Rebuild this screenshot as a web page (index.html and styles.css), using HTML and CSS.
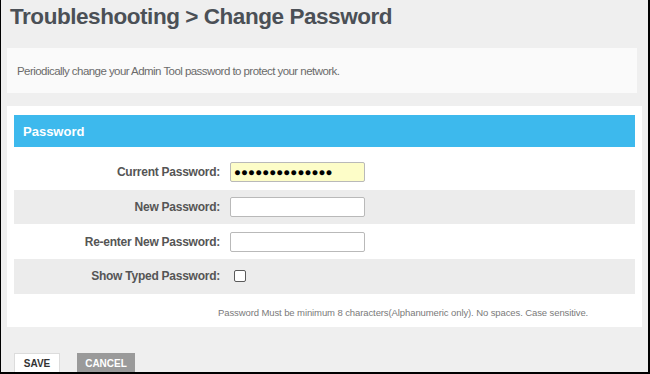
FILE: index.html
```html
<!DOCTYPE html>
<html>
<head>
<meta charset="utf-8">
<link rel="stylesheet" href="styles.css">
</head>
<body>
<div class="frame">
  <h1 class="title">Troubleshooting &gt; Change Password</h1>
  <div class="intro">Periodically change your Admin Tool password to protect your network.</div>
  <div class="panel">
    <div class="panel-head">Password</div>
    <div class="rows">
      <div class="row">
        <label class="lbl">Current Password:</label>
        <div class="field filled">&#9679;&#9679;&#9679;&#9679;&#9679;&#9679;&#9679;&#9679;&#9679;&#9679;&#9679;&#9679;&#9679;&#9679;</div>
      </div>
      <div class="row alt">
        <label class="lbl">New Password:</label>
        <div class="field"></div>
      </div>
      <div class="row">
        <label class="lbl">Re-enter New Password:</label>
        <div class="field"></div>
      </div>
      <div class="row alt">
        <label class="lbl">Show Typed Password:</label>
        <div class="check"></div>
      </div>
    </div>
    <p class="note">Password Must be minimum 8 characters(Alphanumeric only). No spaces. Case sensitive.</p>
  </div>
  <div class="actions">
    <button class="btn save">SAVE</button>
    <button class="btn cancel">CANCEL</button>
  </div>
</div>
</body>
</html>
```
FILE: styles.css
```css
html, body { margin: 0; padding: 0; }
body {
  width: 650px;
  height: 374px;
  overflow: hidden;
  background: #000;
  font-family: "Liberation Sans", Arial, sans-serif;
}
.frame {
  box-sizing: border-box;
  width: 647px;
  height: 372px;
  margin-left: 1px;
  background: #efefef;
  padding: 0 0 0 6px;
  overflow: hidden;
}
.title {
  margin: 0;
  padding: 4px 0 0 3px;
  height: 44px;
  box-sizing: border-box;
  font-size: 22.5px;
  font-weight: bold;
  color: #4b5056;
  letter-spacing: -0.45px;
}
.intro {
  width: 630px;
  height: 45px;
  box-sizing: border-box;
  background: #fafafa;
  margin-top: 4px;
  padding: 17px 0 0 10px;
  font-size: 11.5px;
  color: #6b6b6b;
  letter-spacing: -0.55px;
}
.panel {
  width: 635px;
  height: 221px;
  box-sizing: border-box;
  background: #fff;
  margin-top: 13px;
  padding: 9px 7px 0 7px;
}
.panel-head {
  width: 621px;
  height: 32px;
  box-sizing: border-box;
  background: #3db9ed;
  color: #fff;
  font-weight: bold;
  font-size: 13px;
  padding: 9px 0 0 9px;
}
.rows { margin-top: 8px; width: 621px; }
.row {
  display: flex;
  align-items: center;
  height: 34.7px;
}
.row.alt { background: #ececec; }
.lbl {
  width: 206px;
  text-align: right;
  font-size: 12px;
  font-weight: bold;
  color: #555;
  letter-spacing: -0.25px;
}
.field {
  margin-left: 10px;
  width: 135px;
  height: 20px;
  box-sizing: border-box;
  border: 1px solid #b9b9b9;
  border-radius: 2px;
  background: #fff;
  font-size: 11.5px;
  line-height: 18px;
  padding-left: 3px;
  color: #000;
  letter-spacing: 0.1px;
}
.field.filled { background: #fdfdc8; }
.check {
  margin-left: 14px;
  width: 12px;
  height: 12px;
  box-sizing: border-box;
  border: 1.5px solid #5a5a5a;
  border-radius: 2px;
  background: #fff;
}
.note {
  margin: 13px 0 0 204px;
  font-size: 9.5px;
  color: #7a7a7a;
  letter-spacing: -0.1px;
}
.actions {
  display: flex;
  gap: 17px;
  margin-top: 26px;
  padding-left: 7px;
}
.btn {
  font-family: "Liberation Sans", Arial, sans-serif;
  font-weight: bold;
  font-size: 10px;
  height: 20px;
  padding: 0;
  border-radius: 0;
}
.save {
  width: 46px;
  background: #fff;
  border: 1px solid #dcdcdc;
  color: #333;
}
.cancel {
  width: 58px;
  background: #9a9a9a;
  border: 1px solid #9a9a9a;
  color: #fff;
}
```
